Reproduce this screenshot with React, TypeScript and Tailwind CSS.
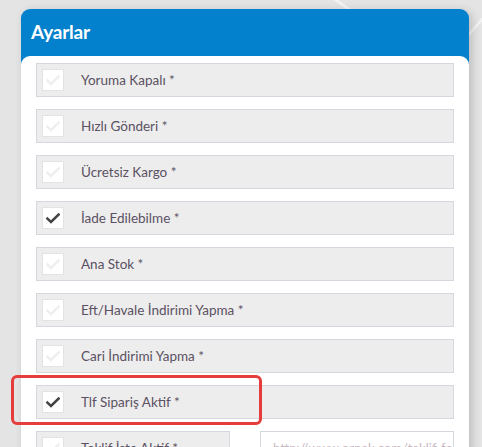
import React from "react";

const settings = [
  { label: "Yoruma Kapalı *", checked: false },
  { label: "Hızlı Gönderi *", checked: false },
  { label: "Ücretsiz Kargo *", checked: false },
  { label: "İade Edilebilme *", checked: true },
  { label: "Ana Stok *", checked: false },
  { label: "Eft/Havale İndirimi Yapma *", checked: false },
  { label: "Cari İndirimi Yapma *", checked: false },
  { label: "Tlf Sipariş Aktif *", checked: true },
];

function CheckBox({ checked }: { checked: boolean }) {
  return (
    <span className="flex h-[22px] w-[22px] shrink-0 items-center justify-center border border-[#e3e3e3] bg-white">
      <svg width="14" height="11" viewBox="0 0 14 11">
        <path
          d="M1.4 5.6 L5 9 L12.6 1.6"
          fill="none"
          stroke={checked ? "#444444" : "#efefef"}
          strokeWidth="2.6"
          strokeLinecap="square"
        />
      </svg>
    </span>
  );
}

function SettingRow({ label, checked }: { label: string; checked: boolean }) {
  return (
    <div className="flex h-[34px] items-center border border-[#d6d8e0] bg-[#ededed] pl-[5px]">
      <CheckBox checked={checked} />
      <span className="ml-[17px] whitespace-nowrap text-[13.5px] text-[#5b5163]">{label}</span>
    </div>
  );
}

export default function App() {
  return (
    <div
      className="relative h-[447px] w-[482px] overflow-hidden bg-[#e4e4e4]"
      style={{ fontFamily: "Lato, 'Noto Sans', sans-serif" }}
    >
      {/* background streaks */}
      <svg className="absolute inset-0" width="482" height="447">
        <line x1="330" y1="-4" x2="356" y2="14" stroke="#f4f4f4" strokeWidth="2.5" />
        <line x1="490" y1="10" x2="466" y2="38" stroke="#f4f4f4" strokeWidth="2.5" />
      </svg>

      <div className="relative ml-[21px] mt-[9px] w-[448px] rounded-t-[9px] bg-gradient-to-b from-[#0481cd] from-60% to-[#0066a6] shadow-[3px_2px_10px_rgba(0,0,0,0.18)]">
        <div className="flex h-[47px] items-center pl-[10px]">
          <h2 className="text-[19px] font-bold tracking-[-0.2px] text-white">Ayarlar</h2>
        </div>
        <div className="flex flex-col gap-[12px] rounded-t-[9px] bg-white px-[15px] pt-[7px] pb-4">
          {settings.map((s) => (
            <SettingRow key={s.label} label={s.label} checked={s.checked} />
          ))}
          <div className="grid grid-cols-2 gap-[30px]">
            <SettingRow label="Teklif İste Aktif *" checked={false} />
            <div className="h-[40px] overflow-hidden whitespace-nowrap border border-[#d6d8e0] bg-white px-3 pt-[7px] text-[13px] text-[#c7b9c2]">
              http://www.ornek.com/teklif-form
            </div>
          </div>
        </div>
      </div>

      {/* highlight */}
      <div className="absolute left-[11px] top-[375px] h-[50px] w-[251px] rounded-[6px] border-[3px] border-[#e63c3c]" />
    </div>
  );
}
